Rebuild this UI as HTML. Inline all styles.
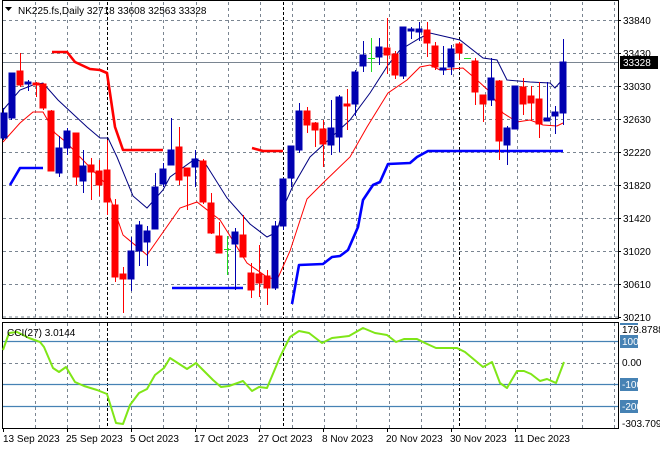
<!DOCTYPE html>
<html><head><meta charset="utf-8"><style>
html,body{margin:0;padding:0;background:#fff;width:660px;height:450px;overflow:hidden}
svg{display:block;font-family:"Liberation Sans",sans-serif;font-size:10px}
</style></head><body>
<svg width="660" height="450" viewBox="0 0 660 450" xmlns="http://www.w3.org/2000/svg">
<rect width="660" height="450" fill="#fff"/>
<!-- grid main -->
<g stroke="#7a8591" stroke-width="1" stroke-dasharray="3,3" fill="none">
<path d="M3 20.5H618M3 53.5H618M3 86.5H618M3 119.5H618M3 152.5H618M3 185.5H618M3 218.5H618M3 251.5H618M3 284.5H618M3 317H618"/>
<path d="M35.5 2V318M67.5 2V318M99.5 2V318M131.5 2V318M163.5 2V318M196.5 2V318M228.5 2V318M260.5 2V318M292.5 2V318M324.5 2V318M356.5 2V318M389.5 2V318M421.5 2V318M453.5 2V318M485.5 2V318M517.5 2V318M550.5 2V318M582.5 2V318M614.5 2V318"/>
<path d="M35.5 323V428M67.5 323V428M99.5 323V428M131.5 323V428M163.5 323V428M196.5 323V428M228.5 323V428M260.5 323V428M292.5 323V428M324.5 323V428M356.5 323V428M389.5 323V428M421.5 323V428M453.5 323V428M485.5 323V428M517.5 323V428M550.5 323V428M582.5 323V428M614.5 323V428"/>
<path d="M3 363.5H618"/>
</g>
<g stroke="#000" stroke-width="1" stroke-dasharray="3,2">
<path d="M107.5 2V318M283.5 2V318M459.5 2V318M107.5 323V428M283.5 323V428M459.5 323V428"/>
</g>
<!-- current price line -->
<path d="M3 62.5H618" stroke="#7a8591" stroke-width="1"/>
<!-- CCI levels -->
<path d="M3 341.5H618M3 384.5H618M3 406.5H618" stroke="#4682b4" stroke-width="1.2"/>
<!-- frames -->
<rect x="2.5" y="0.5" width="616" height="318" fill="none" stroke="#000"/>
<rect x="2.5" y="322.5" width="616" height="106" fill="none" stroke="#000"/>
<!-- thick stop lines -->
<g fill="none" stroke-width="2.6" stroke-linejoin="round">
<path stroke="#ff0000" d="M52 52L67 52L75 62L90 69L100 70L107 73L115 127L123 150L163 150"/>
<path stroke="#ff0000" d="M252 148L263 151L283 151"/>
<path stroke="#0000ff" d="M10 185L20 168L43 168"/>
<path stroke="#0000ff" d="M172 288L243 288"/>
<path stroke="#0000ff" d="M292 304L299 265L323 264L332 257L340 256L348 250L358 227L363 200L373 185L380 182L388 164L410 163L417 157L428 151L563 151"/>
</g>
<!-- MAs -->
<g fill="none" stroke-width="1">
<path stroke="#000080" d="M3 110L20 90L33 85L43 83L58 100L87 127L100 138L108 138L117 157L133 196L147 208L163 190L170 177L195 159L205 163L227 198L250 224L267 237L277 232L283 208L292 188L310 157L323 145L350 120L370 93L388 65L400 50L420 38L430 33L460 40L483 58L497 60L507 80L530 82L550 83L555 88L562 80"/>
<path stroke="#ff0000" d="M3 142L20 123L33 112L43 112L55 133L67 143L80 157L105 183L123 235L147 255L180 208L197 202L220 220L247 263L267 277L277 280L290 251L307 199L323 183L350 157L367 127L388 93L407 80L420 67L430 65L440 70L463 68L477 80L490 92L503 113L517 122L530 120L543 125L557 126L563 123"/>
</g>
<!-- candles -->
<g stroke-width="1" shape-rendering="crispEdges">
<g stroke="#0000b0" fill="#0000b0">
<path d="M3.5 108V140M11.5 73V120M28.5 80V91M59.5 136V177M67.5 128V155M83.5 150V193M131.5 237V291M139.5 221V266M147.5 226V266M155.5 173V229M163.5 163V187M171.5 118V165M195.5 150V187M235.5 228V290M275.5 221V290M283.5 178V230M291.5 146V187M299.5 103V153M331.5 100V155M339.5 95V152M355.5 70V116M363.5 41V72M379.5 38V65M403.5 27V79M411.5 27V39M419.5 22V41M443.5 46V75M451.5 45V75M491.5 58V106M507.5 126V165M515.5 86V129M547.5 82V121M555.5 106V134M563.5 39V125"/>
<rect x="1" y="113" width="6" height="25"/><rect x="9" y="73" width="6" height="45"/><rect x="25" y="82" width="6" height="2"/>
<rect x="56" y="148" width="6" height="25"/><rect x="64" y="131" width="6" height="17"/><rect x="80" y="166" width="6" height="15"/>
<rect x="128" y="251" width="6" height="28"/><rect x="136" y="225" width="6" height="26"/><rect x="144" y="231" width="6" height="11"/>
<rect x="152" y="187" width="6" height="42"/><rect x="160" y="169" width="6" height="15"/><rect x="168" y="150" width="6" height="15"/>
<rect x="192" y="159" width="6" height="8"/><rect x="232" y="232" width="6" height="12"/><rect x="272" y="226" width="6" height="62"/>
<rect x="280" y="179" width="6" height="47"/><rect x="288" y="146" width="6" height="32"/><rect x="296" y="111" width="6" height="39"/>
<rect x="328" y="128" width="6" height="17"/><rect x="336" y="97" width="6" height="40"/><rect x="352" y="72" width="6" height="32"/>
<rect x="360" y="55" width="6" height="11"/><rect x="376" y="47" width="6" height="10"/><rect x="400" y="27" width="6" height="49"/>
<rect x="408" y="29" width="6" height="2"/><rect x="416" y="29" width="6" height="3"/><rect x="440" y="68" width="6" height="2"/>
<rect x="448" y="49" width="6" height="18"/><rect x="488" y="78" width="6" height="22"/><rect x="504" y="128" width="6" height="17"/>
<rect x="512" y="86" width="6" height="43"/><rect x="544" y="118" width="6" height="3"/><rect x="552" y="112" width="6" height="4"/>
<rect x="560" y="62" width="6" height="51"/>
</g>
<g stroke="#ff0000" fill="#ff0000">
<path d="M20.5 53V87M36.5 82V97M43.5 83V110M51.5 110V171M76.5 133V185M91.5 158V200M99.5 160V196M107.5 140V215M115.5 199V282M123.5 267V313M179.5 127V185M187.5 168V210M203.5 159V204M211.5 193V234M219.5 222V253M243.5 215V257M251.5 263V298M259.5 245V297M267.5 270V305M307.5 107V133M315.5 122V147M323.5 120V167M347.5 89V130M387.5 18V74M395.5 51V79M427.5 22V57M435.5 42V70M459.5 42V60M475.5 58V105M483.5 95V122M499.5 80V160M523.5 78V115M531.5 86V121M539.5 82V138"/>
<rect x="17" y="71" width="6" height="14"/><rect x="33" y="83" width="6" height="2"/><rect x="40" y="84" width="6" height="24"/>
<rect x="48" y="111" width="6" height="60"/><rect x="73" y="133" width="6" height="44"/><rect x="88" y="165" width="6" height="7"/>
<rect x="96" y="171" width="6" height="14"/><rect x="104" y="170" width="6" height="32"/><rect x="112" y="205" width="6" height="72"/>
<rect x="120" y="274" width="6" height="5"/><rect x="176" y="147" width="6" height="33"/><rect x="184" y="168" width="6" height="8"/>
<rect x="200" y="161" width="6" height="41"/><rect x="208" y="203" width="6" height="30"/><rect x="216" y="236" width="6" height="17"/>
<rect x="240" y="235" width="6" height="22"/><rect x="248" y="273" width="6" height="17"/><rect x="256" y="274" width="6" height="9"/>
<rect x="264" y="276" width="6" height="12"/><rect x="304" y="111" width="6" height="14"/><rect x="312" y="123" width="6" height="7"/>
<rect x="320" y="129" width="6" height="15"/><rect x="344" y="104" width="6" height="2"/><rect x="384" y="48" width="6" height="7"/>
<rect x="392" y="54" width="6" height="21"/><rect x="424" y="30" width="6" height="13"/><rect x="432" y="46" width="6" height="21"/>
<rect x="456" y="44" width="6" height="9"/><rect x="472" y="61" width="6" height="31"/><rect x="480" y="95" width="6" height="9"/>
<rect x="496" y="81" width="6" height="60"/><rect x="520" y="87" width="6" height="17"/><rect x="528" y="96" width="6" height="7"/>
<rect x="536" y="99" width="6" height="25"/>
</g>
<g stroke="#22dd22" fill="none">
<path d="M227.5 236V275M224 249.5H231M371.5 38V72M368 58.5H375M464 58.5H471"/>
</g>
</g>
<!-- CCI line -->
<path fill="none" stroke="#7fe617" stroke-width="2" stroke-linejoin="round" d="M3 350L9 333L17 332L29 338L40 342L44 347L53 368L59 372L66 367L75 382L84 386L97 390L107 394L116 423L123 424L130 405L139 393L147 389L155 375L164 368L170 358L187 369L196 363L213 380L221 387L229 386L243 381L252 391L259 387L267 388L280 357L290 337L299 331L309 333L322 343L332 338L349 336L363 328L375 333L387 335L396 342L404 339L417 339L425 343L436 348L457 348L465 352L483 367L492 362L500 383L507 388L517 371L524 371L531 374L540 381L547 379L556 383L564 362"/>
<!-- header -->
<path d="M5 7H12L8.5 11Z" fill="#000"/>
<text x="18" y="14" fill="#000">NK225.fs,Daily  32718 33608 32563 33328</text>
<text x="7" y="336" fill="#000">CCI(27) 3.0144</text>
<!-- price axis -->
<g fill="#000">
<path d="M618 20.5h3M618 53.5h3M618 86.5h3M618 119.5h3M618 152.5h3M618 185.5h3M618 218.5h3M618 251.5h3M618 284.5h3M618 317.5h3" stroke="#000"/>
<text x="623" y="24">33840</text><text x="623" y="57">33430</text><text x="623" y="90">33030</text>
<text x="623" y="123">32630</text><text x="623" y="156">32220</text><text x="623" y="189">31820</text>
<text x="623" y="222">31420</text><text x="623" y="255">31020</text><text x="623" y="288">30610</text>
<text x="623" y="321">30210</text>
</g>
<rect x="620" y="56" width="38" height="13" fill="#000"/>
<text x="623" y="66" fill="#fff">33328</text>
<!-- CCI axis -->
<rect x="620" y="323" width="18" height="2" fill="#4682b4"/>
<rect x="620" y="335" width="18" height="13" fill="#4682b4"/>
<rect x="620" y="378" width="18" height="13" fill="#4682b4"/>
<rect x="620" y="400" width="18" height="13" fill="#4682b4"/>
<g fill="#000">
<text x="622" y="333">179.8788</text>
<text x="622" y="345" fill="#fff">100</text>
<text x="622" y="366">0.00</text>
<text x="622" y="388" fill="#fff">-100</text>
<text x="622" y="410" fill="#fff">-200</text>
<text x="622" y="427">-303.709</text>
</g>
<!-- date axis -->
<g fill="#000">
<path d="M3.5 429v3M67.5 429v3M131.5 429v3M195.5 429v3M259.5 429v3M323.5 429v3M387.5 429v3M451.5 429v3M515.5 429v3" stroke="#000"/>
<text x="3" y="442">13 Sep 2023</text><text x="66" y="442">25 Sep 2023</text><text x="130" y="442">5 Oct 2023</text>
<text x="194" y="442">17 Oct 2023</text><text x="258" y="442">27 Oct 2023</text><text x="322" y="442">8 Nov 2023</text>
<text x="386" y="442">20 Nov 2023</text><text x="450" y="442">30 Nov 2023</text><text x="514" y="442">11 Dec 2023</text>
</g>
</svg>
</body></html>
